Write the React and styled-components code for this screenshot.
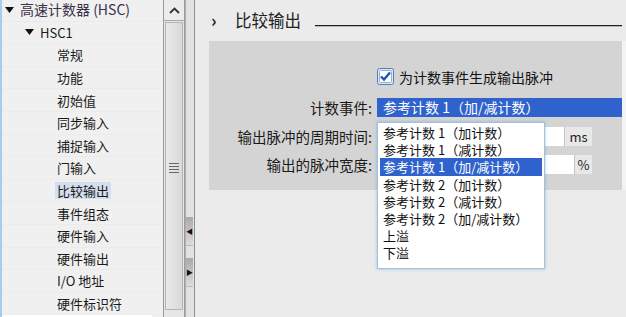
import React from 'react'
import styled, { createGlobalStyle } from 'styled-components'

const GlobalStyle = createGlobalStyle`
  html, body { margin: 0; padding: 0; }
  body {
    width: 626px;
    height: 317px;
    overflow: hidden;
    background: #ebebeb;
    font-family: "Noto Sans CJK SC", "Noto Sans", sans-serif;
    color: #1a1a1a;
  }
`

const treeItems = [
  { label: '高速计数器 (HSC)', level: 0, open: true },
  { label: 'HSC1', level: 1, open: true },
  { label: '常规', level: 2 },
  { label: '功能', level: 2 },
  { label: '初始值', level: 2 },
  { label: '同步输入', level: 2 },
  { label: '捕捉输入', level: 2 },
  { label: '门输入', level: 2 },
  { label: '比较输出', level: 2, selected: true },
  { label: '事件组态', level: 2 },
  { label: '硬件输入', level: 2 },
  { label: '硬件输出', level: 2 },
  { label: 'I/O 地址', level: 2 },
  { label: '硬件标识符', level: 2 },
]

const options = [
  '参考计数 1（加计数）',
  '参考计数 1（减计数）',
  '参考计数 1（加/减计数）',
  '参考计数 2（加计数）',
  '参考计数 2（减计数）',
  '参考计数 2（加/减计数）',
  '上溢',
  '下溢',
]

function DownArrow() {
  return (
    <svg width="9" height="6" viewBox="0 0 9 6">
      <path d="M0 0 L9 0 L4.5 6 Z" fill="#111" />
    </svg>
  )
}

function Checkbox() {
  return (
    <svg width="17" height="17" viewBox="0 0 17 17">
      <rect x="0.5" y="0.5" width="16" height="16" rx="2" fill="#dfe9f5" stroke="#4f7fb5" />
      <rect x="2.5" y="2.5" width="12" height="12" rx="1" fill="#fff" stroke="#8fb0d6" />
      <path d="M4 8.5 L7 11.5 L13 4.5" fill="none" stroke="#1e52b8" strokeWidth="2.4" />
    </svg>
  )
}

export default function App() {
  return (
    <>
      <GlobalStyle />
      <Window>
        <Tree>
          {treeItems.map((item, i) => (
            <TreeRow key={i} level={item.level}>
              {item.open ? <Twisty><DownArrow /></Twisty> : null}
              <TreeLabel selected={item.selected} top={item.level === 0}>
                {item.label}
              </TreeLabel>
            </TreeRow>
          ))}
          <TreeFoot />
        </Tree>

        <VScroll>
          <ScrollBtn>
            <svg width="11" height="7" viewBox="0 0 11 7">
              <path d="M1 6 L5.5 1.5 L10 6" fill="none" stroke="#333" strokeWidth="1.8" />
            </svg>
          </ScrollBtn>
          <Thumb>
            <Grip />
          </Thumb>
        </VScroll>

        <Splitter>
          <SplitBtn top={217}>◀</SplitBtn>
          <SplitBtn top={258}>▶</SplitBtn>
        </Splitter>

        <Content>
          <Header>
            <Chevron>›</Chevron>
            <Title>比较输出</Title>
            <Rule />
          </Header>

          <Section>
            <CheckRow>
              <Checkbox />
              <span>为计数事件生成输出脉冲</span>
            </CheckRow>
            <FieldRow mt={13}>
              <Label>计数事件:</Label>
              <Select>参考计数 1（加/减计数）</Select>
            </FieldRow>
            <FieldRow mt={10}>
              <Label>输出脉冲的周期时间:</Label>
              <Input>
                <Unit w={27}>ms</Unit>
              </Input>
            </FieldRow>
            <FieldRow mt={9}>
              <Label>输出的脉冲宽度:</Label>
              <Input>
                <Unit w={17}>%</Unit>
              </Input>
            </FieldRow>
          </Section>

          <DropList>
            {options.map((o, i) => (
              <Option key={i} active={i === 2}>{o}</Option>
            ))}
          </DropList>
        </Content>
      </Window>
    </>
  )
}

const Window = styled.div`
  display: flex;
  width: 626px;
  height: 317px;
  overflow: hidden;
`

const Tree = styled.div`
  width: 161px;
  flex-shrink: 0;
  background: #f0f0f0;
  border-left: 2px solid #a9cde8;
  display: flex;
  flex-direction: column;
`

const TreeRow = styled.div`
  height: 22.6px;
  display: flex;
  align-items: center;
  padding-left: ${p => (p.level === 0 ? 3 : p.level === 1 ? 23 : 53)}px;
  border-bottom: 1px solid #ebebeb;
  box-sizing: border-box;
  flex-shrink: 0;
  &:first-child { margin-top: -1px; }
`

const Twisty = styled.span`
  width: 13px;
  display: flex;
  align-items: center;
`

const TreeLabel = styled.span`
  font-size: ${p => (p.top ? 14 : 13)}px;
  line-height: 17px;
  padding: 0 2px;
  color: ${p => (p.top ? '#3a3148' : '#1a1a1a')};
  background: ${p => (p.selected ? '#d3dfee' : 'transparent')};
  white-space: nowrap;
`

const TreeFoot = styled.div`
  margin-top: auto;
  height: 5px;
  width: 150px;
  background: #fff;
`

const VScroll = styled.div`
  width: 20px;
  flex-shrink: 0;
  background: #e6e6e6;
  border-left: 1px solid #9a9a9a;
  border-right: 1px solid #9a9a9a;
  display: flex;
  flex-direction: column;
`

const ScrollBtn = styled.div`
  height: 20px;
  display: flex;
  align-items: center;
  justify-content: center;
  background: #ececec;
  border-bottom: 1px solid #a6a6a6;
`

const Thumb = styled.div`
  margin: 1px 1px 0;
  height: 286px;
  background: linear-gradient(90deg, #e9e9e9, #d9d9d9);
  border: 1px solid #b4b4b4;
  display: flex;
  align-items: center;
  justify-content: center;
`

const Grip = styled.div`
  width: 10px;
  height: 8px;
  border-top: 1px solid #666;
  border-bottom: 1px solid #666;
  position: relative;
  margin-top: 4px;
  &::before, &::after {
    content: '';
    position: absolute;
    left: 0;
    right: 0;
    height: 1px;
    background: #666;
  }
  &::before { top: 2px; }
  &::after { top: 5px; }
`

const Splitter = styled.div`
  width: 8px;
  flex-shrink: 0;
  background: #e2e2e2;
  border-left: 1px solid #b0b0b0;
  border-right: 1px solid #8e8e8e;
  position: relative;
`

const SplitBtn = styled.div`
  position: absolute;
  top: ${p => p.top}px;
  left: 0;
  width: 7px;
  height: 28px;
  background: linear-gradient(180deg, #a9a9a9, #dcdcdc);
  border-bottom: 1px solid #b8b8b8;
  font-size: 7px;
  line-height: 28px;
  color: #111;
`

const Content = styled.div`
  flex: 1;
  background: #ebebeb;
  position: relative;
  padding-left: 14px;
`

const Header = styled.div`
  height: 41px;
  display: flex;
  align-items: center;
`

const Chevron = styled.span`
  font-size: 17px;
  font-weight: bold;
  width: 22px;
  padding-left: 2px;
  margin-top: -2px;
`

const Title = styled.span`
  font-size: 16.5px;
  margin-left: 2px;
  color: #222;
  margin-top: -1px;
`

const Rule = styled.div`
  flex: 1;
  height: 1px;
  background: #222;
  border-bottom: 1px solid #b5b5b5;
  margin: 10px 4px 0 14px;
`

const Section = styled.div`
  background: #d4d4d4;
  height: 149px;
  padding-top: 27px;
  box-sizing: border-box;
  border-right: 4px solid #f3f3f3;
`

const CheckRow = styled.div`
  display: flex;
  align-items: center;
  gap: 5px;
  padding-left: 168px;
  height: 17px;
  font-size: 14px;
  color: #111;
`

const FieldRow = styled.div`
  display: flex;
  align-items: center;
  margin-top: ${p => p.mt}px;
  height: 19px;
`

const Label = styled.div`
  width: 163px;
  text-align: right;
  padding-right: 5px;
  font-size: 14.5px;
  line-height: 19px;
  color: #1a1a1a;
  white-space: nowrap;
`

const Select = styled.div`
  flex: 1;
  height: 19px;
  background: #2f62cc;
  color: #fff;
  font-size: 14px;
  line-height: 19px;
  padding-left: 6px;
  white-space: nowrap;
`

const Input = styled.div`
  width: 215px;
  height: 19px;
  background: #fff;
  display: flex;
  justify-content: flex-end;
`

const Unit = styled.div`
  width: ${p => p.w}px;
  background: #e8e8e8;
  border-left: 1px solid #c4c4c4;
  font-size: 13px;
  line-height: 19px;
  text-align: center;
  color: #222;
`

const DropList = styled.div`
  position: absolute;
  left: 182px;
  top: 122px;
  width: 162px;
  padding: 1px 2px 6px;
  background: #fff;
  border: 1px solid #9ec3de;
  box-shadow: 0 0 3px rgba(80, 150, 200, 0.5);
`

const Option = styled.div`
  height: 17.2px;
  line-height: 17px;
  font-size: 13px;
  padding-left: 3px;
  white-space: nowrap;
  color: ${p => (p.active ? '#fff' : '#111')};
  background: ${p => (p.active ? '#2f62cc' : 'transparent')};
`
